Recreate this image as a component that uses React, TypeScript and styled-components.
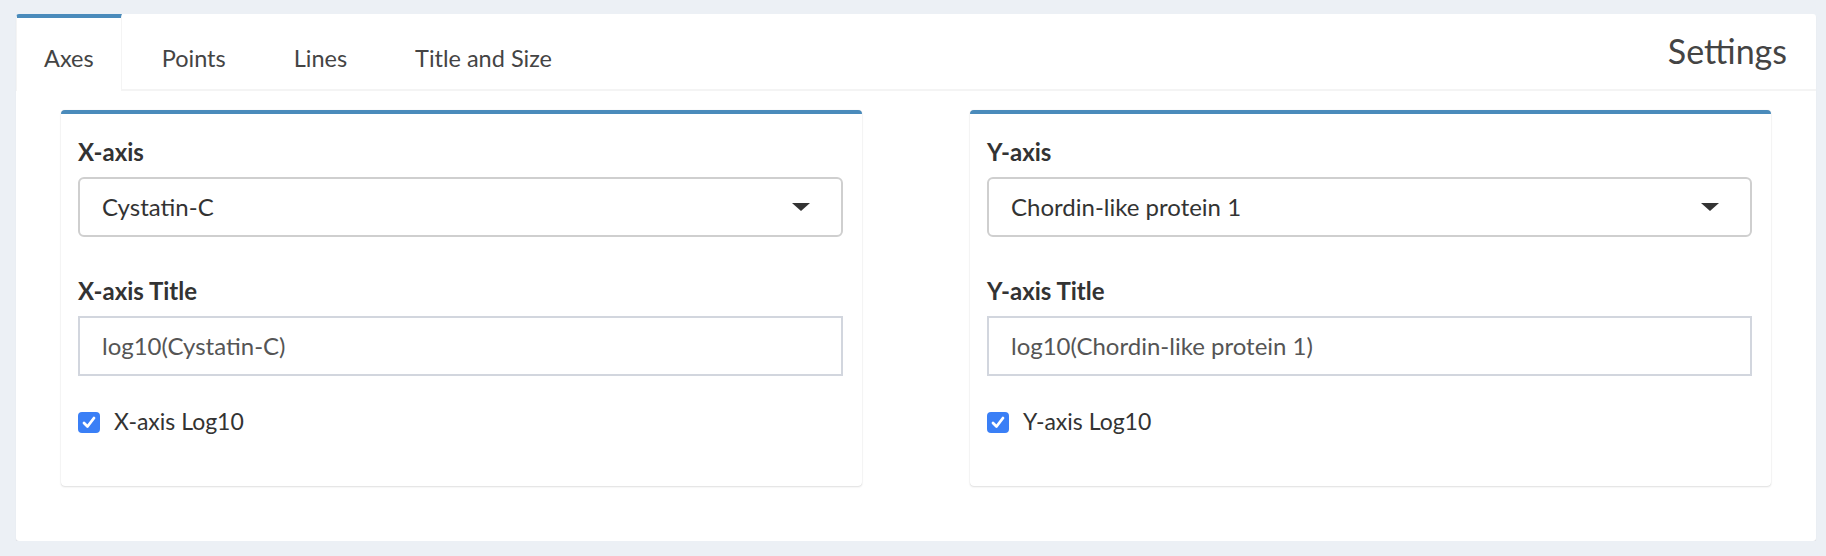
import React from "react";
import styled, { createGlobalStyle } from "styled-components";

const Global = createGlobalStyle`
  html, body { margin: 0; padding: 0; }
  body {
    background: #ecf0f5;
    font-family: "Lato", "Noto Sans", sans-serif;
    color: #333;
  }
`;

const Page = styled.div`
  padding: 14px 10px 0 16px;
`;

const Box = styled.div`
  background: #fff;
  border-radius: 3px;
  box-shadow: 0 1px 1px rgba(0, 0, 0, 0.1);
`;

const TabBar = styled.div`
  display: flex;
  align-items: flex-start;
  border-bottom: 2px solid #f4f4f4;
`;

const Tab = styled.div<{ $active?: boolean }>`
  box-sizing: border-box;
  height: 77px;
  margin-bottom: -2px;
  margin-right: 12px;
  padding: 28px 27px 21px;
  border-top: 4px solid ${(p) => (p.$active ? "#4a8bbb" : "transparent")};
  border-left: 1px solid ${(p) => (p.$active ? "#f4f4f4" : "transparent")};
  border-right: 1px solid ${(p) => (p.$active ? "#f4f4f4" : "transparent")};
  background: ${(p) => (p.$active ? "#fff" : "transparent")};
  border-top-left-radius: ${(p) => (p.$active ? "3px" : "0")};
  font-size: 23.5px;
  line-height: 24px;
  color: #444;
  white-space: nowrap;
`;

const Header = styled.div`
  margin-left: auto;
  padding: 20px 29px 0 0;
  font-size: 34px;
  line-height: 34px;
  color: #444;
`;

const TabContent = styled.div`
  display: grid;
  grid-template-columns: 1fr 1fr;
  column-gap: 108px;
  padding: 19px 45px 55px;
`;

const Card = styled.div`
  background: #fff;
  border-top: 4px solid #4a8bbb;
  border-radius: 4px;
  box-shadow: 0 0 1px rgba(0, 0, 0, 0.12), 0 1px 2px rgba(0, 0, 0, 0.12);
  padding: 26px 19px 53px 17px;
`;

const Field = styled.div`
  margin-bottom: 42px;
`;

const Label = styled.div`
  font-weight: 700;
  font-size: 24px;
  line-height: 24px;
  color: #333;
  margin-bottom: 13px;
`;

const SelectBox = styled.div`
  box-sizing: border-box;
  height: 60px;
  display: flex;
  align-items: center;
  justify-content: space-between;
  padding: 0 31px 0 22px;
  border: 2px solid #cfcfcf;
  border-radius: 6px;
  background: #fff;
  font-size: 24px;
  line-height: 24px;
  color: #333;
`;

const Caret = styled.span`
  width: 0;
  height: 0;
  border-left: 9px solid transparent;
  border-right: 9px solid transparent;
  border-top: 8px solid #333;
`;

const TextInput = styled.div`
  box-sizing: border-box;
  height: 60px;
  display: flex;
  align-items: center;
  padding: 0 22px;
  border: 2px solid #d2d6de;
  background: #fff;
  font-size: 24px;
  line-height: 24px;
  color: #555;
`;

const CheckRow = styled.div`
  display: flex;
  align-items: center;
  gap: 14px;
  margin-top: -9px;
  font-size: 23px;
  line-height: 24px;
  color: #333;
`;

const CheckBox = styled.span`
  width: 22px;
  height: 21px;
  border-radius: 4px;
  background: #3a7ff6;
  display: inline-flex;
  align-items: center;
  justify-content: center;
  margin-top: 3px;
`;

type AxisProps = {
  axis: string;
  value: string;
  title: string;
};

const AxisCard = ({ axis, value, title }: AxisProps) => (
  <Card>
    <Field>
      <Label>{axis}-axis</Label>
      <SelectBox>
        <span>{value}</span>
        <Caret />
      </SelectBox>
    </Field>
    <Field>
      <Label>{axis}-axis Title</Label>
      <TextInput>{title}</TextInput>
    </Field>
    <CheckRow>
      <CheckBox>
        <svg width="14" height="13" viewBox="0 0 14 13">
          <polyline
            points="2,7 5.5,10.5 12,2"
            fill="none"
            stroke="#fff"
            strokeWidth="2.8"
            strokeLinecap="round"
            strokeLinejoin="round"
          />
        </svg>
      </CheckBox>
      <span>{axis}-axis Log10</span>
    </CheckRow>
  </Card>
);

export default function App() {
  return (
    <Page>
      <Global />
      <Box>
        <TabBar>
          <Tab $active>Axes</Tab>
          <Tab>Points</Tab>
          <Tab>Lines</Tab>
          <Tab>Title and Size</Tab>
          <Header>Settings</Header>
        </TabBar>
        <TabContent>
          <AxisCard axis="X" value="Cystatin-C" title="log10(Cystatin-C)" />
          <AxisCard
            axis="Y"
            value="Chordin-like protein 1"
            title="log10(Chordin-like protein 1)"
          />
        </TabContent>
      </Box>
    </Page>
  );
}
